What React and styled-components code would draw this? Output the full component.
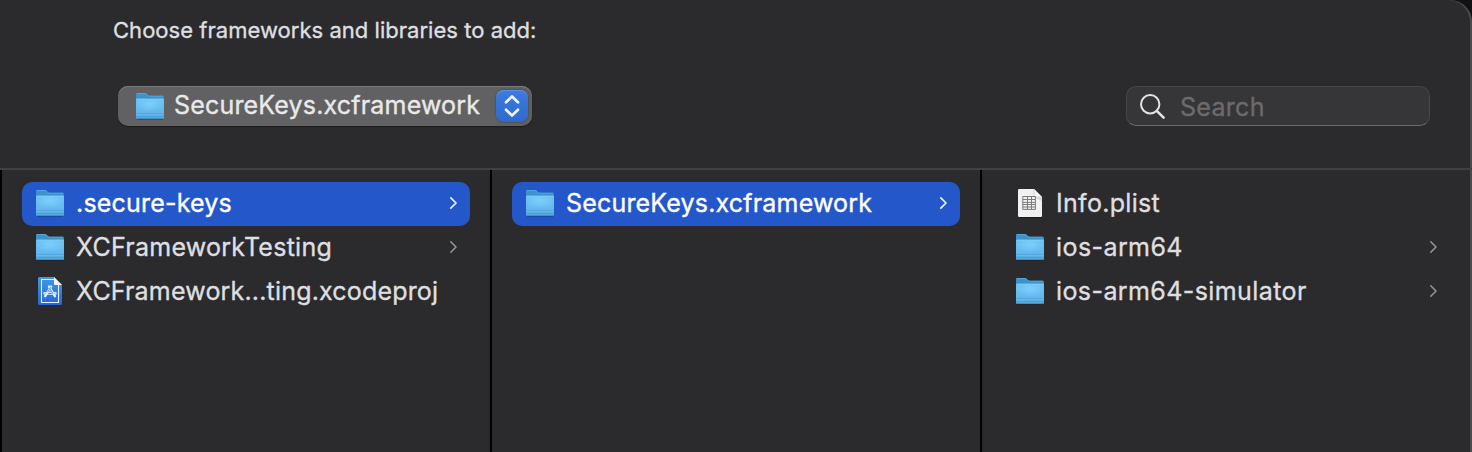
import React from "react";
import styled, { createGlobalStyle } from "styled-components";

const Global = createGlobalStyle`
  * { box-sizing: border-box; }
  body { margin: 0; background: #111112; overflow: hidden; }
`;

const Sheet = styled.main`
  width: 1472px;
  height: 452px;
  display: flex;
  flex-direction: column;
  background: #2b2b2d;
  border-top-right-radius: 22px;
  box-shadow: inset -2px 0 0 #4b4b4c;
  color: #dfdfe0;
  font-family: Inter, "Liberation Sans", sans-serif;
  -webkit-text-stroke: 0.35px currentColor;
  overflow: hidden;
`;

const Header = styled.header`
  height: 170px;
  flex: none;
  border-bottom: 2px solid #414143;
  padding-top: 14px;
`;

const Title = styled.h1`
  margin: 0 0 0 113px;
  height: 32px;
  font-size: 22px;
  font-weight: 400;
  line-height: 32px;
  letter-spacing: 0.03px;
  white-space: nowrap;
`;

const Toolbar = styled.div`
  display: flex;
  justify-content: space-between;
  margin: 40px 42px 0 118px;
`;

const Label = styled.span`
  font-size: 25px;
  line-height: 40px;
  white-space: pre;
  letter-spacing: ${(p) => p.$track || 0}px;
`;

const PathMenu = styled.button`
  width: 414px;
  height: 40px;
  display: flex;
  align-items: center;
  padding: 0 4px 0 18px;
  border: 0;
  border-radius: 10px;
  background: #616163;
  box-shadow: inset 0 1px 0 #7c7c7e, 0 1px 1px #1c1c1d;
  color: #e9e9ea;
  font-family: inherit;
  text-align: left;

  ${Label} { margin: -2px auto 0 10px; }
`;

const Stepper = styled.span`
  width: 32px;
  height: 32px;
  border-radius: 8px;
  background: linear-gradient(#3c7ce0, #2f69cb);
  box-shadow: 0 0 2px #38383c, inset 0 1px 0 #5c8fe2;
`;

const SearchField = styled.div`
  width: 304px;
  height: 40px;
  display: flex;
  align-items: center;
  gap: 14px;
  padding: 2px 0 0 13px;
  border: 1px solid #464648;
  border-bottom-color: #6a6a6c;
  border-radius: 10px;
  background: #363638;
  color: #6b6b6d;
`;

const Browser = styled.div`
  flex: 1;
  display: flex;
`;

const Column = styled.ul`
  width: 490px;
  margin: 0;
  padding: 12px 20px;
  border-left: 2px solid #000;
  list-style: none;
`;

const Row = styled.li`
  height: 44px;
  display: flex;
  align-items: center;
  padding: 0 10px 2px 14px;
  border-radius: 10px;
  background: ${(p) => (p.$selected ? "#2457c9" : "transparent")};
  color: ${(p) => (p.$selected ? "#fff" : "#dfdfe0")};

  ${Label} { margin: -1px auto 0 12px; }
`;

const Svg = styled.svg`
  display: block;
  flex: none;
  overflow: visible;
`;

const Folder = () => (
  <Svg width="28" height="28" viewBox="0 0 28 28">
    <defs>
      <linearGradient id="folderFront" x1="0" y1="0" x2="0" y2="1">
        <stop offset="0" stopColor="#69c0f3" />
        <stop offset="0.65" stopColor="#64b8ec" />
        <stop offset="1" stopColor="#4ea3da" />
      </linearGradient>
      <radialGradient id="folderGlow" cx="0.5" cy="0.3" r="0.55">
        <stop offset="0" stopColor="#7dcffc" />
        <stop offset="1" stopColor="#7dcffc" stopOpacity="0" />
      </radialGradient>
    </defs>
    <path d="M1 27.3H27" stroke="#000" strokeOpacity=".3" strokeWidth="1" />
    <path d="M0 2.3Q0 1 1.3 1H8.5Q9.7 1 10.6 1.8L12 3Q12.8 3.8 14 3.8H26.7Q28 3.8 28 5.2V10H0Z" fill="#3d92cc" />
    <path d="M.8 1.5H9Q10 1.7 11 2.7L12.5 4.2H27" fill="none" stroke="#55aade" strokeWidth=".8" />
    <path d="M0 7.8Q0 6.8 1 6.8H27Q28 6.8 28 7.8V25.7Q28 27 26.7 27H1.3Q0 27 0 25.7Z" fill="url(#folderFront)" />
    <path d="M0 7H28V22H0Z" fill="url(#folderGlow)" />
    <path d="M.6 7.2H27.4" stroke="#83d1f8" strokeWidth=".8" />
    <path d="M0 21.5H28M0 24.5H28" stroke="#4299d0" strokeWidth=".8" strokeOpacity=".55" />
    <path d="M0 22.5H28" stroke="#70c1ef" strokeWidth=".7" strokeOpacity=".7" />
    <path d="M.5 26.6H27.5" stroke="#368bc4" strokeWidth=".8" />
  </Svg>
);

const Project = () => (
  <Svg width="28" height="28" viewBox="0 0 28 28">
    <defs>
      <linearGradient id="projectFill" x1="0" y1="0" x2="0" y2="1">
        <stop offset="0" stopColor="#3f9be4" />
        <stop offset="1" stopColor="#2a63d8" />
      </linearGradient>
    </defs>
    <path d="M3.5 0H18L26 8V26.5Q26 28 24.5 28H3.5Q2 28 2 26.5V1.5Q2 0 3.5 0Z" fill="url(#projectFill)" />
    <path d="M18 2.5H5.5V25.5H22.5V8" fill="none" stroke="#e6f1fc" strokeWidth="1.1" />
    <path d="M18 0L26 8H19Q18 8 18 7Z" fill="#f2f4f7" />
    <g fill="none" strokeLinecap="round">
      <path d="M8.7 16.4H19.3" stroke="#dcecfc" strokeWidth="2.8" />
      <path d="M9.2 16.4H18.8" stroke="#3984df" strokeWidth="1" />
      <path d="M15.1 9.6L9.2 19.2M13 9.6L18.9 19.2" stroke="#dcecfc" strokeWidth="2.4" />
      <path d="M14.8 10.2L12 14.8M14 12L17 16.6" stroke="#3984df" strokeWidth=".8" />
    </g>
  </Svg>
);

const Plist = () => (
  <Svg width="28" height="28" viewBox="0 0 28 28">
    <path d="M3 28.3H25" stroke="#000" strokeOpacity=".4" />
    <path d="M3.3 0H18L26 8V26.7Q26 28 24.7 28H3.3Q2 28 2 26.7V1.3Q2 0 3.3 0Z" fill="#f1f1f1" />
    <path d="M18 0L26 8H19.2Q18 8 18 6.8Z" fill="#fff" stroke="#bebebe" strokeWidth=".7" />
    <path d="M18.5 8.3H26V12Z" fill="#dadada" />
    <path d="M6.8 7.5H19.4V20.4H6.8ZM6.8 10.5H19.4M6.8 13.4H19.4M6.8 15.5H19.4M6.8 18H19.4M11.5 7.5V20.4M15.5 7.5V20.4" fill="none" stroke="#7c7c7c" strokeWidth="1" />
  </Svg>
);

const Chevron = ({ selected }) => (
  <Svg width="14" height="14" viewBox="0 0 14 14">
    <path d="M4.8 1.8L10 7L4.8 12.2" fill="none" stroke={selected ? "#eef2fc" : "#949496"} strokeWidth={selected ? 1.7 : 1.6} strokeLinecap="round" strokeLinejoin="round" />
  </Svg>
);

const Arrows = () => (
  <Svg width="32" height="32" viewBox="0 0 32 32">
    <path d="M10 12.2L16 6.5L22 12.2M10 19.8L16 25.5L22 19.8" fill="none" stroke="#eef3fb" strokeWidth="2.7" strokeLinecap="round" strokeLinejoin="round" />
  </Svg>
);

const Magnifier = () => (
  <Svg width="26" height="26" viewBox="0 0 26 26">
    <circle cx="10.2" cy="10.3" r="9.2" fill="none" stroke="#e2e2e3" strokeWidth="2" />
    <path d="M17 17.1L23.6 23.7" stroke="#e2e2e3" strokeWidth="2.6" strokeLinecap="round" />
  </Svg>
);

const icons = { folder: Folder, project: Project, plist: Plist };

const columns = [
  [
    { name: ".secure-keys", icon: "folder", open: true, selected: true, track: 0.2 },
    { name: "XCFrameworkTesting", icon: "folder", open: true, track: 0.26 },
    { name: "XCFramework...ting.xcodeproj", icon: "project", track: 0.18 },
  ],
  [{ name: "SecureKeys.xcframework", icon: "folder", open: true, selected: true, track: 0.18 }],
  [
    { name: "Info.plist", icon: "plist", track: 0.3 },
    { name: "ios-arm64", icon: "folder", open: true, track: 0.42 },
    { name: "ios-arm64-simulator", icon: "folder", open: true, track: 0.41 },
  ],
];

const Item = ({ name, icon, open, selected, track }) => {
  const Icon = icons[icon];
  return (
    <Row $selected={selected}>
      <Icon />
      <Label $track={track}>{name}</Label>
      {open && <Chevron selected={selected} />}
    </Row>
  );
};

export default function App() {
  return (
    <>
      <Global />
      <Sheet>
        <Header>
          <Title>Choose frameworks and libraries to add:</Title>
          <Toolbar>
            <PathMenu>
              <Folder />
              <Label $track={0.18}>SecureKeys.xcframework</Label>
              <Stepper><Arrows /></Stepper>
            </PathMenu>
            <SearchField>
              <Magnifier />
              <Label $track={0.3}>Search</Label>
            </SearchField>
          </Toolbar>
        </Header>
        <Browser>
          {columns.map((items, i) => (
            <Column key={i}>
              {items.map((item) => <Item key={item.name} {...item} />)}
            </Column>
          ))}
        </Browser>
      </Sheet>
    </>
  );
}
